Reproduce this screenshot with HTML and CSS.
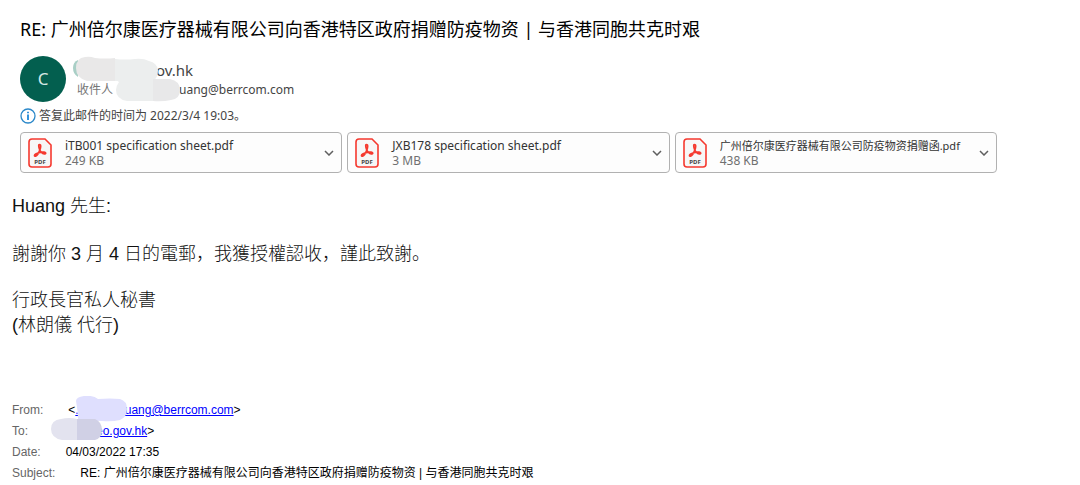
FILE: index.html
```html
<!DOCTYPE html>
<html lang="zh-CN">
<head>
    <meta charset="UTF-8">
    <meta name="viewport" content="width=device-width, initial-scale=1.0">
    <title>RE: 广州倍尔康医疗器械有限公司</title>
    <link rel="stylesheet" href="styles.css">
</head>
<body>
    <svg class="defs" aria-hidden="true">
        <symbol id="pdf" viewBox="0 0 24 30">
            <path d="M4 1h13l6 6v19a3 3 0 0 1-3 3H4a3 3 0 0 1-3-3V4a3 3 0 0 1 3-3z" fill="#f7f7f7" stroke="#f5392f" stroke-width="1.6"/>
            <path d="M11.4 6.5c1.9 0 1.3 3.200.4 5.600-1 2.700-2.700 5.600-4.200 6-1.500.3-1.500-1.300.1-2.200 2.200-1.200 6-2 8.500-1.700 2.200.3 1.800 1.900.1 1.700-2.100-.3-4.100-2.700-4.900-4.900-.7-2-1-4.500 0-4.500z" fill="none" stroke="#f5392f" stroke-width="1.7"/>
            <text x="12" y="26" text-anchor="middle">PDF</text>
        </symbol>
        <symbol id="chevron" viewBox="0 0 10 6">
            <path d="M1 1l4 4 4-4" fill="none" stroke="#5f5f5f" stroke-width="1.5"/>
        </symbol>
    </svg>

    <header class="mail-header">
        <h1>RE: 广州倍尔康医疗器械有限公司向香港特区政府捐赠防疫物资 | 与香港同胞共克时艰</h1>
        <div class="sender">
            <div class="avatar">C</div>
            <div class="people">
                <div class="sender-name">ov.hk</div>
                <div class="recipient"><span class="to-label">收件人</span><span>uang@berrcom.com</span></div>
                <svg class="mask" width="110" height="46" viewBox="0 0 110 46" aria-hidden="true">
                    <path d="M6 4Q1 6 1 12t5 9z" fill="#a9cfc6"/>
                    <path d="M43 2v23H15Q4 22 4 12T13 1q5-1 10 1 10 1 20 0z" fill="#e9e8e8"/>
                    <path d="M43 3q10 1 20 0 8-1 14 2 8 2 9 9 0 8-5 11H43z" fill="#eceeee"/>
                    <path d="M43 23h38v22H55q-11-2-11-11 0-4 3-8z" fill="#eceeee"/>
                    <path d="M81 23h17q10 2 10 11t-9 10q-9 2-18 1z" fill="#e8e8e9"/>
                </svg>
            </div>
        </div>
        <div class="notice">
            <svg width="16" height="16" viewBox="0 0 16 16" aria-hidden="true">
                <circle cx="8" cy="8" r="7" fill="none" stroke="#2b88c9" stroke-width="1.3"/>
                <path d="M8 6.5V12M8 3.700v1.600" stroke="#0078d4" stroke-width="1.6"/>
            </svg>
            <span>答复此邮件的时间为 2022/3/4 19:03。</span>
        </div>
        <div class="attachments">
            <div class="attachment">
                <svg class="pdf" aria-hidden="true"><use href="#pdf"/></svg>
                <div class="file">
                    <a href="#" lang="en">iTB001 specification sheet.pdf</a>
                    <span>249 KB</span>
                </div>
                <button aria-label="iTB001"><svg width="10" height="6"><use href="#chevron"/></svg></button>
            </div>
            <div class="attachment">
                <svg class="pdf" aria-hidden="true"><use href="#pdf"/></svg>
                <div class="file">
                    <a href="#" lang="en">JXB178 specification sheet.pdf</a>
                    <span>3 MB</span>
                </div>
                <button aria-label="JXB178"><svg width="10" height="6"><use href="#chevron"/></svg></button>
            </div>
            <div class="attachment">
                <svg class="pdf" aria-hidden="true"><use href="#pdf"/></svg>
                <div class="file">
                    <a href="#" lang="zh-CN">广州倍尔康医疗器械有限公司防疫物资捐赠函.pdf</a>
                    <span>438 KB</span>
                </div>
                <button aria-label="捐赠函"><svg width="10" height="6"><use href="#chevron"/></svg></button>
            </div>
        </div>
    </header>

    <main class="mail-body" lang="zh-HK">
        <p>Huang 先生:</p>
        <p>謝謝你 3 月 4 日的電郵<span lang="zh-CN">，</span>我獲授權認收<span lang="zh-CN">，</span>謹此致謝<span lang="zh-CN">。</span></p>
        <p>行政長官私人秘書<br>(林朗儀 代行)</p>
    </main>

    <dl class="quoted">
        <div><dt>From:</dt><dd>&lt;<a href="#">.<span class="gap gap-from"></span>uang@berrcom.com</a>&gt;</dd></div>
        <div><dt>To:</dt><dd><span class="gap gap-to"></span><a href="#">eo.gov.hk</a>&gt;</dd></div>
        <div><dt>Date:</dt><dd>04/03/2022 17:35</dd></div>
        <div><dt>Subject:</dt><dd>RE: 广州倍尔康医疗器械有限公司向香港特区政府捐赠防疫物资 | 与香港同胞共克时艰</dd></div>
        <svg class="mask" width="80" height="46" viewBox="0 0 80 46" aria-hidden="true">
            <path d="M26 5q0-4 8-5 9-1 14 3 12-1 22 0 7 2 7 10t-7 11q-8 2-18 1l-24-1q0-8-2-19z" fill="#dfdffe"/>
            <path d="M27 23v21H12Q1 42 1 33t10-10q8-2 16 0z" fill="#e3e3ef"/>
            <path d="M27 23h18q7 3 7 11t-7 10H27z" fill="#d0d0e5"/>
        </svg>
    </dl>
</body>
</html>
```
FILE: styles.css
```css
body {
    margin: 0;
    background: #fff;
    color: #000;
    font-family: "Noto Sans", "Noto Sans CJK SC", sans-serif;
    font-size: 12px;
}
.defs {
    display: none;
}
.mail-header {
    padding: 16px 83px 0 20px;
}
h1 {
    margin: 0;
    font-size: 18px;
    font-weight: normal;
    line-height: 26px;
}
.sender {
    display: flex;
    gap: 6px;
    margin-top: 14px;
}
.avatar {
    width: 46px;
    height: 46px;
    border-radius: 50%;
    background: #035f4f;
    color: #d5e8e4;
    font-size: 17px;
    line-height: 46px;
    text-align: center;
}
.people {
    position: relative;
    color: #444;
}
.sender-name {
    padding-left: 84px;
    font-size: 15px;
    line-height: 28px;
}
.recipient {
    display: flex;
    gap: 66px;
    padding-left: 5px;
    line-height: 12px;
}
.to-label {
    color: #767676;
}
.mask {
    position: absolute;
    top: 0;
    left: 0;
}
.notice {
    display: flex;
    align-items: center;
    gap: 3px;
    margin-top: 4px;
    color: #444;
    line-height: 20px;
}
.attachments {
    display: grid;
    grid-template-columns: repeat(3, 1fr);
    gap: 5px;
    margin-top: 6px;
}
.attachment {
    display: flex;
    align-items: center;
    box-sizing: border-box;
    height: 41px;
    padding: 0 7px;
    border: 1px solid #b1b1b1;
    border-radius: 4px;
    background: #fdfdfd;
}
.pdf {
    width: 24px;
    height: 30px;
    flex: none;
}
#pdf text {
    font: bold 6px "Noto Sans", sans-serif;
    fill: #444;
}
.file {
    flex: 1;
    min-width: 0;
    margin-left: 13px;
    line-height: 15px;
    white-space: nowrap;
}
.file a {
    display: block;
    color: #333;
    text-decoration: none;
}
.file a:lang(zh) {
    font-size: 11px;
}
.file span {
    display: block;
    color: #707070;
}
.attachment button {
    display: flex;
    padding: 0;
    border: 0;
    background: none;
}
.mail-body {
    padding: 21px 12px 0;
    color: #111;
    font-family: "Liberation Sans", "Noto Sans CJK TC", sans-serif;
    font-size: 18px;
    font-weight: 300;
    line-height: 25px;
}
.mail-body p {
    margin: 0 0 21px;
}
.mail-body span {
    font-family: "Noto Sans CJK SC", sans-serif;
}
.quoted {
    position: relative;
    margin: 62px 12px 0;
    font-family: "Liberation Sans", "Noto Sans CJK SC", sans-serif;
    line-height: 21px;
}
.quoted div {
    display: flex;
    gap: 25px;
    height: 21px;
}
.quoted dt {
    color: #666;
}
.quoted dd {
    margin: 0;
}
.quoted a {
    color: #00f;
}
.quoted .mask {
    top: -4px;
    left: 38px;
}
.gap {
    display: inline-block;
}
.gap-from {
    width: 46px;
}
.gap-to {
    width: 43px;
}
```
